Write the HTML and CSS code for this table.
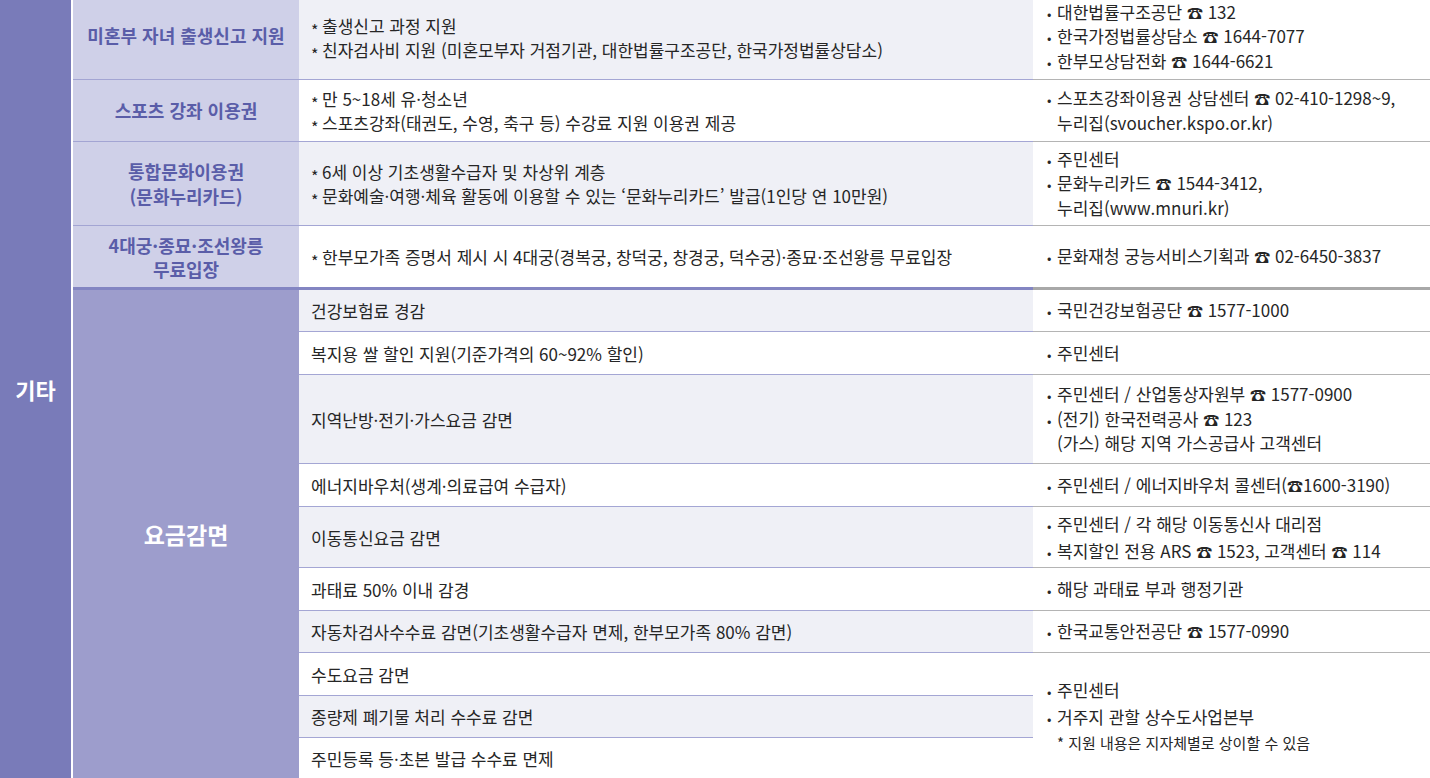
FILE: index.html
```html
<!DOCTYPE html>
<html lang="ko">
<head>
<meta charset="utf-8">
<title>기타 지원</title>
<link rel="stylesheet" href="styles.css">
</head>
<body>
<table class="bt">
  <colgroup>
    <col class="c-cat"><col class="c-sub"><col class="c-desc"><col class="c-contact">
  </colgroup>
  <tbody>
    <tr class="h80 first">
      <th class="cat" rowspan="14">기타</th>
      <th class="sub">미혼부 자녀 출생신고 지원</th>
      <td class="desc alt">
        <ul class="star">
          <li>출생신고 과정 지원</li>
          <li>친자검사비 지원 (미혼모부자 거점기관, 대한법률구조공단, 한국가정법률상담소)</li>
        </ul>
      </td>
      <td class="contact">
        <ul class="dot">
          <li>대한법률구조공단 <span class="tel">☎</span> 132</li>
          <li>한국가정법률상담소 <span class="tel">☎</span> 1644-7077</li>
          <li>한부모상담전화 <span class="tel">☎</span> 1644-6621</li>
        </ul>
      </td>
    </tr>
    <tr class="h62">
      <th class="sub">스포츠 강좌 이용권</th>
      <td class="desc">
        <ul class="star">
          <li>만 5~18세 유·청소년</li>
          <li>스포츠강좌(태권도, 수영, 축구 등) 수강료 지원 이용권 제공</li>
        </ul>
      </td>
      <td class="contact">
        <ul class="dot">
          <li>스포츠강좌이용권 상담센터 <span class="tel">☎</span> 02-410-1298~9,<br>누리집(svoucher.kspo.or.kr)</li>
        </ul>
      </td>
    </tr>
    <tr class="h84">
      <th class="sub">통합문화이용권<br>(문화누리카드)</th>
      <td class="desc alt">
        <ul class="star">
          <li>6세 이상 기초생활수급자 및 차상위 계층</li>
          <li>문화예술·여행·체육 활동에 이용할 수 있는 ‘문화누리카드’ 발급(1인당 연 10만원)</li>
        </ul>
      </td>
      <td class="contact">
        <ul class="dot">
          <li>주민센터</li>
          <li>문화누리카드 <span class="tel">☎</span> 1544-3412,<br>누리집(www.mnuri.kr)</li>
        </ul>
      </td>
    </tr>
    <tr class="h64 sep">
      <th class="sub tight">4대궁·종묘·조선왕릉<br>무료입장</th>
      <td class="desc">
        <ul class="star">
          <li>한부모가족 증명서 제시 시 4대궁(경복궁, 창덕궁, 창경궁, 덕수궁)·종묘·조선왕릉 무료입장</li>
        </ul>
      </td>
      <td class="contact">
        <ul class="dot">
          <li>문화재청 궁능서비스기획과 <span class="tel">☎</span> 02-6450-3837</li>
        </ul>
      </td>
    </tr>
    <tr class="h42">
      <th class="sub fee" rowspan="10">요금감면</th>
      <td class="desc alt">건강보험료 경감</td>
      <td class="contact"><ul class="dot"><li>국민건강보험공단 <span class="tel">☎</span> 1577-1000</li></ul></td>
    </tr>
    <tr class="h43">
      <td class="desc">복지용 쌀 할인 지원(기준가격의 60~92% 할인)</td>
      <td class="contact"><ul class="dot"><li>주민센터</li></ul></td>
    </tr>
    <tr class="h89">
      <td class="desc alt">지역난방·전기·가스요금 감면</td>
      <td class="contact">
        <ul class="dot">
          <li>주민센터 / 산업통상자원부 <span class="tel">☎</span> 1577-0900</li>
          <li>(전기) 한국전력공사 <span class="tel">☎</span> 123<br>(가스) 해당 지역 가스공급사 고객센터</li>
        </ul>
      </td>
    </tr>
    <tr class="h43">
      <td class="desc">에너지바우처(생계·의료급여 수급자)</td>
      <td class="contact"><ul class="dot"><li>주민센터 / 에너지바우처 콜센터(<span class="tel">☎</span>1600-3190)</li></ul></td>
    </tr>
    <tr class="h61">
      <td class="desc alt">이동통신요금 감면</td>
      <td class="contact">
        <ul class="dot wide">
          <li>주민센터 / 각 해당 이동통신사 대리점</li>
          <li>복지할인 전용 ARS <span class="tel">☎</span> 1523, 고객센터 <span class="tel">☎</span> 114</li>
        </ul>
      </td>
    </tr>
    <tr class="h43">
      <td class="desc">과태료 50% 이내 감경</td>
      <td class="contact"><ul class="dot"><li>해당 과태료 부과 행정기관</li></ul></td>
    </tr>
    <tr class="h42">
      <td class="desc alt">자동차검사수수료 감면(기초생활수급자 면제, 한부모가족 80% 감면)</td>
      <td class="contact"><ul class="dot"><li>한국교통안전공단 <span class="tel">☎</span> 1577-0990</li></ul></td>
    </tr>
    <tr class="h43">
      <td class="desc">수도요금 감면</td>
      <td class="contact last" rowspan="3">
        <ul class="dot wide">
          <li>주민센터</li>
          <li>거주지 관할 상수도사업본부</li>
        </ul>
        <p class="note">* 지원 내용은 지자체별로 상이할 수 있음</p>
      </td>
    </tr>
    <tr class="h42">
      <td class="desc alt">종량제 폐기물 처리 수수료 감면</td>
    </tr>
    <tr class="h40">
      <td class="desc last">주민등록 등·초본 발급 수수료 면제</td>
    </tr>
  </tbody>
</table>
</body>
</html>
```

FILE: styles.css
```css
* {
  box-sizing: border-box;
}

html,
body {
  margin: 0;
  padding: 0;
  background: #ffffff;
}

body {
  width: 1430px;
  height: 778px;
  overflow: hidden;
  font-family: "Noto Sans CJK KR", "Noto Sans", sans-serif;
  color: #262626;
}

.bt {
  width: 1430px;
  border-collapse: separate;
  border-spacing: 0;
  table-layout: fixed;
}

.c-cat { width: 73px; }
.c-sub { width: 226px; }
.c-desc { width: 734px; }
.c-contact { width: 397px; }

.h40 { height: 40px; }
.h42 { height: 42px; }
.h43 { height: 43px; }
.h61 { height: 61px; }
.h62 { height: 62px; }
.h64 { height: 64px; }
.h80 { height: 80px; }
.h84 { height: 84px; }
.h89 { height: 89px; }

th,
td {
  padding: 0;
  vertical-align: middle;
  text-align: left;
  font-weight: 400;
}

ul {
  list-style: none;
  margin: 0;
  padding: 0;
}

/* first column */
.cat {
  background: #797bb9;
  border-right: 2px solid #ffffff;
  color: #ffffff;
  font-size: 22px;
  font-weight: 700;
  text-align: center;
}

/* second column */
.sub {
  background: #cfd0e8;
  color: #5a5da8;
  font-size: 18px;
  font-weight: 700;
  line-height: 25px;
  text-align: center;
  border-bottom: 1px solid #a3a5d3;
}

.sub.tight {
  line-height: 24px;
}

.sub.fee {
  background: #9d9dcc;
  color: #ffffff;
  font-size: 23px;
  border-bottom: 0;
}

/* description column */
.desc {
  background: #ffffff;
  font-size: 17px;
  line-height: 23px;
  padding-left: 12px;
  border-bottom: 1px solid #a4a6d4;
}

.desc.alt {
  background: #eff0f6;
}

.star li::before {
  content: "*";
  display: inline-block;
  width: 11px;
  font-size: 16px;
  line-height: 16px;
  vertical-align: -4px;
}

/* contact column */
.contact {
  background: #ffffff;
  font-size: 17px;
  line-height: 24.5px;
  padding-left: 14px;
  border-bottom: 1px solid #b4b4b4;
}

.dot li {
  padding-left: 10px;
  text-indent: -10px;
}

.dot li::before {
  content: "•";
  display: inline-block;
  width: 10px;
  text-indent: 0;
  font-size: 13px;
  line-height: 13px;
}

.dot.wide li {
  line-height: 27px;
}

.tel {
  font-size: 16px;
  line-height: 16px;
}

.note {
  margin: 0;
  padding-left: 10px;
  font-size: 15px;
  line-height: 26px;
}

.last {
  border-bottom: 0;
}

/* first row sits slightly high: the table is cut at the top edge */
.first > .sub {
  padding-bottom: 8px;
}

.first > .desc {
  padding-bottom: 3px;
}

.first > .contact > .dot {
  margin-top: -6px;
}

/* heavy separator */
.sep > .sub,
.sep > .desc {
  border-bottom: 3px solid #8385c2;
}

.sep > .contact {
  border-bottom: 3px solid #a8a8a8;
}
```
